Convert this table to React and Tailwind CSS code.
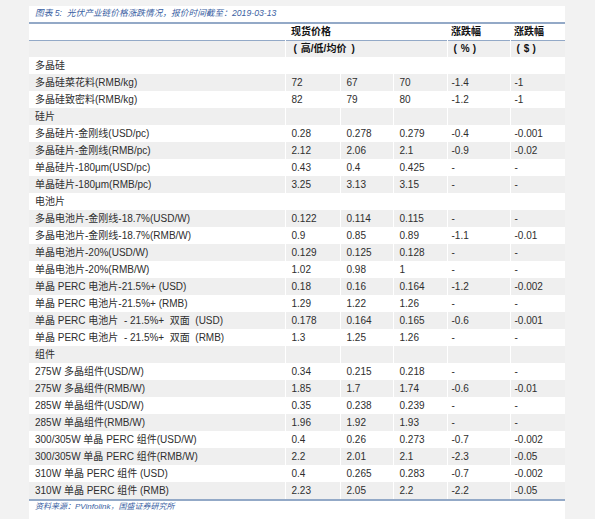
import React from "react";

const rows = [
  ["多晶硅"],
  ["多晶硅菜花料(RMB/kg)", "72", "67", "70", "-1.4", "-1"],
  ["多晶硅致密料(RMB/kg)", "82", "79", "80", "-1.2", "-1"],
  ["硅片"],
  ["多晶硅片-金刚线(USD/pc)", "0.28", "0.278", "0.279", "-0.4", "-0.001"],
  ["多晶硅片-金刚线(RMB/pc)", "2.12", "2.06", "2.1", "-0.9", "-0.02"],
  ["单晶硅片-180μm(USD/pc)", "0.43", "0.4", "0.425", "-", "-"],
  ["单晶硅片-180μm(RMB/pc)", "3.25", "3.13", "3.15", "-", "-"],
  ["电池片"],
  ["多晶电池片-金刚线-18.7%(USD/W)", "0.122", "0.114", "0.115", "-", "-"],
  ["多晶电池片-金刚线-18.7%(RMB/W)", "0.9", "0.85", "0.89", "-1.1", "-0.01"],
  ["单晶电池片-20%(USD/W)", "0.129", "0.125", "0.128", "-", "-"],
  ["单晶电池片-20%(RMB/W)", "1.02", "0.98", "1", "-", "-"],
  ["单晶 PERC 电池片-21.5%+ (USD)", "0.18", "0.16", "0.164", "-1.2", "-0.002"],
  ["单晶 PERC 电池片-21.5%+ (RMB)", "1.29", "1.22", "1.26", "-", "-"],
  ["单晶 PERC 电池片  - 21.5%+  双面  (USD)", "0.178", "0.164", "0.165", "-0.6", "-0.001"],
  ["单晶 PERC 电池片  - 21.5%+  双面  (RMB)", "1.3", "1.25", "1.26", "-", "-"],
  ["组件"],
  ["275W 多晶组件(USD/W)", "0.34", "0.215", "0.218", "-", "-"],
  ["275W 多晶组件(RMB/W)", "1.85", "1.7", "1.74", "-0.6", "-0.01"],
  ["285W 单晶组件(USD/W)", "0.35", "0.238", "0.239", "-", "-"],
  ["285W 单晶组件(RMB/W)", "1.96", "1.92", "1.93", "-", "-"],
  ["300/305W 单晶 PERC 组件(USD/W)", "0.4", "0.26", "0.273", "-0.7", "-0.002"],
  ["300/305W 单晶 PERC 组件(RMB/W)", "2.2", "2.01", "2.1", "-2.3", "-0.05"],
  ["310W 单晶 PERC 组件 (USD)", "0.4", "0.265", "0.283", "-0.7", "-0.002"],
  ["310W 单晶 PERC 组件 (RMB)", "2.23", "2.05", "2.2", "-2.2", "-0.05"],
];

const widths = ["w-[256px]", "w-[55px]", "w-[53px]", "w-[54px]", "w-[63px]", "w-[55px]"];

export default function App() {
  return (
    <div className="w-[595px] h-[519px] bg-[#f2f2f2] pt-[6px] pl-[29px] overflow-hidden">
      <div
        className="w-[536px] h-[513px] bg-white text-[#2e2e2e]"
        style={{ fontFamily: '"Liberation Sans", "Noto Sans CJK SC", sans-serif' }}
      >
        <div className="h-[16px] flex items-center pl-[6px] text-[8.7px] italic text-[#3b5fa3] whitespace-pre">
          图表 5:  光伏产业链价格涨跌情况，报价时间截至：2019-03-13
        </div>
        <div className="h-[2px] bg-[#93a9c7]" />
        <table className="border-collapse table-fixed w-[536px] text-[10px] leading-none">
          <colgroup>
            {widths.map((w, i) => (
              <col key={i} className={w} />
            ))}
          </colgroup>
          <tbody>
            <tr className="h-[16px] bg-white border-b-[1.5px] border-[#93a9c7]">
              <td />
              <td colSpan={3} className="pl-[6px] font-semibold text-[#111]">现货价格</td>
              <td className="pl-[4px] font-semibold text-[#111]">涨跌幅</td>
              <td className="pl-[4px] font-semibold text-[#111]">涨跌幅</td>
            </tr>
            <tr className="h-[17px] bg-[#efefef]">
              <td className="border-r border-white" />
              <td colSpan={3} className="pl-[8px] font-semibold text-[#111] border-r border-white whitespace-pre">
                (<span className="ml-[4px]">高/低/均价</span><span className="ml-[5px]">)</span>
              </td>
              <td className="pl-[6px] font-bold text-[#111] border-r border-white whitespace-pre">
                (<span className="ml-[4px]">%</span><span className="ml-[3px]">)</span>
              </td>
              <td className="pl-[6px] font-bold text-[#111] whitespace-pre">
                (<span className="ml-[4px]">$</span><span className="ml-[3px]">)</span>
              </td>
            </tr>
            {rows.map((r, i) => (
              <tr key={i} className={`h-[17px] ${i % 2 === 0 ? "bg-white" : "bg-[#efefef]"}`}>
                {widths.map((_, j) => (
                  <td
                    key={j}
                    className={`whitespace-pre overflow-hidden ${j >= 4 ? "pl-[4px]" : "pl-[6px]"} ${j < 5 ? "border-r border-white" : ""}`}
                  >
                    {r[j] ?? ""}
                  </td>
                ))}
              </tr>
            ))}
          </tbody>
        </table>
        <div className="h-[1.5px] bg-[#93a9c7]" />
        <div className="pl-[6px] pt-[1px] text-[8px] italic text-[#3b5fa3] leading-[10px]">
          资料来源：PVinfolink，国盛证券研究所
        </div>
      </div>
    </div>
  );
}
